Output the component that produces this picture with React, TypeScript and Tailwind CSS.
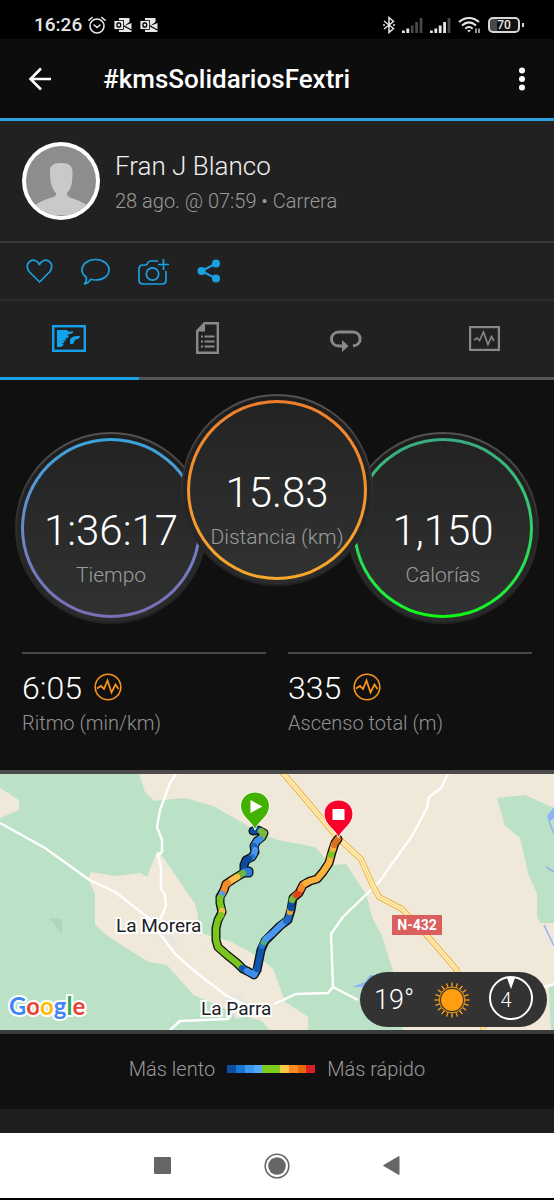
import React from 'react';

const legendColors = [
  'bg-[#0b4ea2]',
  'bg-[#1976d2]',
  'bg-[#3d96f0]',
  'bg-[#52a9ff]',
  'bg-[#7ccb1c]',
  'bg-[#7ccb1c]',
  'bg-[#fdc746]',
  'bg-[#f98b24]',
  'bg-[#e96a0c]',
  'bg-[#d81f26]',
];

const trackOutline =
  'M253 57 L258 56 L264 59 L262 63 L257 67 L254 72 L255 78 L252 83 L246 86 L244 91 L244 98 L249 97 L249 99 L244 99 L240 101 L232 106 L226 110 L224 116 L220 123 L220 129 L222 138 L218 146 L216 154 L216 166 L218 173 L227 181 L237 189 L243 195 L249 198 L254 201 L257 196 L259 186 L261 176 L265 167 L273 159 L280 152 L288 146 L291 136 L293 124 L299 119 L303 111 L310 107 L317 105 L323 98 L329 89 L332 78 L335 69 L338 65';

const trackParts = [
  { color: '#0c4c9c', d: 'M253 57 L258 56 L261 57' },
  { color: '#7ab93a', d: 'M261 57 L264 59 L262 63 L260 65' },
  { color: '#3f8eea', d: 'M260 65 L257 67 L254 72' },
  { color: '#1f63b8', d: 'M254 72 L255 76' },
  { color: '#4a97f2', d: 'M255 76 L254 80 L252 83' },
  { color: '#2a72cc', d: 'M252 83 L249 85' },
  { color: '#0c4c9c', d: 'M249 85 L246 86 L244 91 L244 98' },
  { color: '#2f7ddb', d: 'M244 98 L249 97 L249 99 L244 99' },
  { color: '#6fb53c', d: 'M243 99 L240 101 L237 103' },
  { color: '#fbc04a', d: 'M237 103 L232 106 L228 109' },
  { color: '#f58a2a', d: 'M228 109 L226 110 L224 116 L222 120' },
  { color: '#5a9be0', d: 'M222 120 L220 124' },
  { color: '#7ac520', d: 'M220 124 L220 129 L222 137' },
  { color: '#f3c24a', d: 'M222 137 L221 141' },
  { color: '#7ac520', d: 'M221 141 L218 146 L216 154 L216 166 L218 173 L227 181 L237 189 L242 194' },
  { color: '#1459ad', d: 'M242 194 L247 197' },
  { color: '#3f8eea', d: 'M247 197 L254 201 L257 195' },
  { color: '#0f56ad', d: 'M257 195 L259 186 L261 176 L262 172' },
  { color: '#2a72cc', d: 'M262 172 L264 168' },
  { color: '#4fae72', d: 'M264 168 L266 165' },
  { color: '#4a97f2', d: 'M266 165 L273 159 L280 152 L286 147' },
  { color: '#1f6ac4', d: 'M286 147 L288 146 L290 138' },
  { color: '#e6a63a', d: 'M290 138 L291 134' },
  { color: '#0c4c9c', d: 'M291 134 L292 126' },
  { color: '#7ab93a', d: 'M292 126 L293 124 L296 121' },
  { color: '#e0431c', d: 'M296 121 L299 119 L301 115' },
  { color: '#f58a2a', d: 'M301 115 L303 111 L306 109' },
  { color: '#fbb23c', d: 'M306 109 L310 107 L317 105 L323 98 L329 89 L331 81' },
  { color: '#7ac520', d: 'M331 81 L333 75' },
  { color: '#f9b23a', d: 'M333 75 L334 71' },
  { color: '#d9701c', d: 'M334 71 L335 69 L338 65' },
];

const StatusBar = () => (
  <div className="flex h-[39px] items-center justify-between bg-black pt-[10px] pr-[30px] pl-[34px] text-[#e6e6e6]">
    <div className="flex items-center gap-2">
      <span className="w-[46px] text-[19px] leading-6 font-medium">16:26</span>
      <svg width="18" height="18" viewBox="0 0 18 18" fill="none" stroke="currentColor" strokeWidth="1.6" strokeLinecap="round">
        <circle cx="9" cy="10" r="7" />
        <path d="M6 9 L9 11.500 L12 9 M1 4.200 L4.200 1.500 M17 4.200 L13.800 1.500" />
      </svg>
      {[0, 1].map((i) => (
        <svg key={i} width="18" height="14" viewBox="0 0 18 14">
          <path d="M5 0 H15.500 V4 L10 8 L17.500 5 V14 H5 Z" fill="currentColor" />
          <path d="M10 8 L17.500 12" stroke="#000" strokeWidth="1.400" />
          <rect x="0" y="2.500" width="9.500" height="9" fill="currentColor" stroke="#000" strokeWidth="0.800" />
          <rect x="3" y="5" width="3.600" height="4" rx="1.200" fill="none" stroke="#000" strokeWidth="1.400" />
        </svg>
      ))}
    </div>

    <div className="flex items-center gap-[7px]">
      <svg width="12" height="18" viewBox="0 0 12 18" fill="none" stroke="currentColor" strokeWidth="1.500">
        <path d="M1 5 L10.500 12.500 L6 16.500 V1.500 L10.500 5.500 L1 13" />
        <path d="M0 9 H2 M10 9 H12" />
      </svg>
      {[2, 4].map((level) => (
        <svg key={level} width="21" height="16" viewBox="0 0 21 16">
          {[2.5, 4.5, 7.5, 11, 15].map((h, i) => (
            <rect key={h} x={i * 4.4} y={16 - h} width="2.800" height={h} fill={i < level ? '#e6e6e6' : '#484848'} />
          ))}
        </svg>
      ))}
      <svg width="23" height="18" viewBox="0 0 23 18" fill="none" stroke="currentColor" strokeWidth="2">
        <path d="M1 6 C7 0.500 15 0.500 21 6 M4 9.500 C8.500 5.500 13.500 5.500 18 9.500 M7.300 12.700 C9.800 10.500 12.200 10.500 14.700 12.700" />
        <path d="M9.200 14 L11 16.500 L12.800 14 Z" fill="currentColor" stroke="none" />
        <path d="M18 17 V12.500 M21 12.500 V17" strokeWidth="1.300" />
      </svg>
      <div className="flex items-center gap-[2px]">
        <div className="flex h-4 w-8 items-center justify-center rounded-[5px] border-2 border-[#d6d6d6] bg-linear-to-r from-[#484848] from-25% to-[#111] to-26% text-xs leading-3 font-medium">
          70
        </div>
        <div className="h-1 w-[2px] bg-[#d6d6d6]" />
      </div>
    </div>
  </div>
);

const AppBar = () => (
  <header className="flex h-[82px] items-center border-b-[3px] border-[#2e9fdf] bg-[#0d0d0d] pr-5 pl-7 text-white">
    <button type="button" aria-label="Atrás" className="w-[75px]">
      <svg width="24" height="24" viewBox="0 0 24 24" fill="none" stroke="currentColor" strokeWidth="2.600">
        <path d="M23 12 H2.500 M13 1.500 L2.500 12 L13 22.500" />
      </svg>
    </button>
    <h1 className="flex-1 text-[26px] leading-8 font-medium">#kmsSolidariosFextri</h1>
    <button type="button" aria-label="Más opciones" className="flex w-6 justify-center">
      <svg width="6" height="24" viewBox="0 0 6 24" fill="currentColor">
        <circle cx="3" cy="3.500" r="3" />
        <circle cx="3" cy="12" r="3" />
        <circle cx="3" cy="20.500" r="3" />
      </svg>
    </button>
  </header>
);

const Profile = () => (
  <section className="flex h-[122px] items-center gap-[15px] border-b-2 border-[#383838] px-[22px]">
    <svg width="78" height="78" viewBox="0 0 78 78">
      <defs>
        <clipPath id="avatar">
          <circle cx="39" cy="39" r="35" />
        </clipPath>
      </defs>
      <circle cx="39" cy="39" r="39" fill="#fff" />
      <circle cx="39" cy="39" r="35" fill="#8d8d8d" />
      <path
        clipPath="url(#avatar)"
        fill="#c9c9c9"
        d="M28 31 C27 24 31 21 39 21 C47 21 51 24 50.500 31 C50.500 42 49 47 45 51 C45 55 47 55 52 57 C58 59 62 61 66 64 V73 H12 V64 C17 60 22 58 28 56 C33 55 34 54 34 51 C30 47 28 41 28 31 Z"
      />
    </svg>
    <div className="pt-[5px]">
      <h2 className="text-[26px] leading-8 font-light text-[#f0f0f0]">Fran J Blanco</h2>
      <p className="pt-[3px] text-xl leading-8 font-light text-[#9a9a9a]">28 ago. @ 07:59 • Carrera</p>
    </div>
  </section>
);

const Actions = () => (
  <div className="flex h-[58px] items-center gap-[28px] border-b-2 border-[#2d2d2d] px-[26px] text-[#1ba0e2]">
    <button type="button" aria-label="Me gusta">
      <svg width="27" height="24" viewBox="0 0 27 24" fill="none" stroke="currentColor" strokeWidth="1.700" strokeLinejoin="round">
        <path d="M13.500 23 L3.500 13 C0 9 1 4 4 2.200 C7.500 0 11 1.500 13.500 5.500 C16 1.500 19.500 0 23 2.200 C26 4 27 9 23.500 13 Z" />
      </svg>
    </button>
    <button type="button" aria-label="Comentar">
      <svg width="29" height="27" viewBox="0 0 29 27" fill="none" stroke="currentColor" strokeWidth="1.700" strokeLinejoin="round">
        <path d="M14.500 1.500 C22 1.500 28 6 28 12 C28 18 22 22 14.500 22 C12.500 22 11 21.800 9.500 21.300 C8 24 6 25.500 3.500 25.800 C5.200 24 5.600 22 5.300 19.200 C2.600 17.300 1 15 1 12 C1 6 7 1.500 14.500 1.500 Z" />
      </svg>
    </button>
    <button type="button" aria-label="Añadir foto">
      <svg width="31" height="27" viewBox="0 0 31 27" fill="none" stroke="currentColor" strokeWidth="1.700">
        <path d="M20 3 H12 C9 3 10.500 7 7.500 7 H5 C2.500 7 1 8.500 1 11 V22 C1 24.500 2.500 26 5 26 H24 C26.500 26 28 24.500 28 22 V13" />
        <circle cx="14.500" cy="16" r="6.200" />
        <path d="M25.500 1 V12 M20 6.500 H31" />
      </svg>
    </button>
    <button type="button" aria-label="Compartir">
      <svg width="24" height="24" viewBox="0 0 24 24" fill="currentColor">
        <path d="M19 4.500 L4.500 12 L19 19.500" fill="none" stroke="currentColor" strokeWidth="2" />
        <circle cx="19" cy="4.500" r="4" />
        <circle cx="4.500" cy="12" r="4" />
        <circle cx="19" cy="19.500" r="4" />
      </svg>
    </button>
  </div>
);

const Tabs = () => (
  <nav className="grid h-[79px] grid-cols-4 text-[#898989]">
    <button type="button" aria-label="Resumen" className="flex items-center justify-center border-b-[3px] border-[#1ba0e2] pb-[2px] text-[#12a2ec]">
      <svg width="34" height="27" viewBox="0 0 34 27">
        <rect x="1.200" y="1.200" width="31.600" height="24.600" fill="none" stroke="currentColor" strokeWidth="2.400" />
        <path
          fill="currentColor"
          d="M5 5 H15 L16 6.500 H21 V8 L15 10 L17 11 L16 12.500 L13 14 L15 15.500 H11 L13 17 L10 18.500 L12 20 L9 22 H5 Z M18 19 V14 C20 11.500 23 11 28 11 L27 13.500 L23 15 L21 19 Z"
        />
      </svg>
    </button>
    <button type="button" aria-label="Detalles" className="flex items-center justify-center border-b-[3px] border-[#555] pb-[2px]">
      <svg width="23" height="32" viewBox="0 0 23 32">
        <path d="M1.200 30.800 V9 L8.500 1.200 H21.800 V30.800 Z" fill="none" stroke="currentColor" strokeWidth="2.400" />
        <path d="M1 9 L8 1 H9 V9.500 H1 Z" fill="currentColor" />
        <path d="M5 14.500 H7 M8.500 14.500 H18.500 M5 19.500 H7 M8.500 19.500 H18.500 M5 24.500 H7 M8.500 24.500 H18.500" stroke="currentColor" strokeWidth="2" />
      </svg>
    </button>
    <button type="button" aria-label="Vueltas" className="flex items-center justify-center border-b-[3px] border-[#555] pt-[3px]">
      <svg width="32" height="22" viewBox="0 0 32 22">
        <path d="M14 16 H9 C-1 16 -1 2 9 2 H22.500 C32 2 33 15 23 16" fill="none" stroke="currentColor" strokeWidth="3" />
        <path d="M12 10 L18.500 16 L12 22 Z" fill="currentColor" />
      </svg>
    </button>
    <button type="button" aria-label="Gráficas" className="flex items-center justify-center border-b-[3px] border-[#555] pb-[2px]">
      <svg width="31" height="25" viewBox="0 0 31 25" fill="none" stroke="currentColor">
        <rect x="1.100" y="1.100" width="28.800" height="22.800" strokeWidth="2.200" />
        <path d="M5 14 L8 12 L10.500 14.500 L14.500 6 L19 18.500 L22.500 10.500 L25 15" strokeWidth="1.600" />
      </svg>
    </button>
  </nav>
);

interface RingProps {
  value: string;
  label: string;
  ring: string;
  className?: string;
}

const Ring: React.FC<RingProps> = ({ value, label, ring, className = '' }) => (
  <div className={`h-48 w-48 shrink-0 rounded-full bg-linear-to-b from-[#565252] via-[#2c2c2c] to-[#222] p-[2px] ${className}`}>
    <div className="h-full rounded-full bg-linear-to-b from-[#1d1d1d] to-[#2b2b2d] p-1">
      <div className={`h-full rounded-full bg-linear-to-b p-[3px] ${ring}`}>
        <div className="flex h-full flex-col items-center rounded-full bg-linear-to-b from-[#232323] to-[#303231] pt-[66px]">
          <span className="text-[42px] leading-[48px] font-light text-white">{value}</span>
          <span className="pt-1 text-[21px] leading-8 font-light whitespace-nowrap text-[#9c9c9c]">{label}</span>
        </div>
      </div>
    </div>
  </div>
);

const Stat = ({ value, label }: { value: string; label: string }) => (
  <div className="border-t-2 border-[#484848] pt-[14px]">
    <div className="flex items-center gap-3">
      <span className="text-[32px] leading-10 font-light text-white">{value}</span>
      <svg width="28" height="28" viewBox="0 0 28 28" fill="none" stroke="#f7941d" className="mb-[2px]">
        <circle cx="14" cy="14" r="12.800" strokeWidth="1.600" />
        <path d="M3 15.500 L7 13 L10 16 L13.500 7.500 L17.500 19.500 L21.500 11.500 L24.500 16" strokeWidth="1.800" />
      </svg>
    </div>
    <p className="text-xl leading-[30px] font-light text-[#929292]">{label}</p>
  </div>
);

const Pin = ({ x, y, color, children }: { x: number; y: number; color: string; children: React.ReactNode }) => (
  <g transform={`translate(${x} ${y})`}>
    <path d="M0 0 C-3 -9 -14.500 -13 -14.500 -24 C-14.500 -32 -8 -38 0 -38 C8 -38 14.500 -32 14.500 -24 C14.500 -13 3 -9 0 0 Z" fill={color} stroke="#fff" strokeWidth="1" />
    {children}
  </g>
);

const RouteMap = () => (
  <section className="relative h-[264px] overflow-hidden border-y-[4px] border-t-[#4b4b4b] border-b-[#3a3d3b]">
    <svg className="h-full w-full" viewBox="0 0 554 256" preserveAspectRatio="xMidYMid slice">
      <rect width="554" height="256" fill="#f0e8d8" />
      {/* woodland */}
      <g fill="#bbe2c6">
        <path d="M0 0 H139 L145 18 L154 27 L185 24 L213 32 L245 50 L262 60 L278 66 L315 73 L325 84 L335 91 L346 90 L366 120 L372 143 L382 162 L393 197 L403 256 H308 V243 L285 228 L273 195 L267 190 L250 178 L229 167 L197 158 L198 141 L195 130 L178 105 L160 79 L157 77 L147 103 L141 99 L115 102 L91 98 L88 105 L95 120 V150 L105 160 L126 174 L149 188 L167 191 L194 221 L233 238 L262 247 L270 256 H0 Z" />
        <path d="M497 24 L525 21 L554 34 V149 L540 149 L537 142 V120 L528 99 L520 64 L505 52 Z" />
        <path d="M549 214 L554 210 V256 H551 Z" />
      </g>
      {/* clearing between both halves of the track */}
      <path d="M229 167 L250 178 L267 190 L273 195 L285 228 L308 243 V256 H270 L262 247 L233 238 L194 221 L167 191 Z" fill="#f0e8d8" />
      <path d="M0 14 L19 26 V36 L0 44 Z" fill="#f0e8d8" />
      <path d="M49 144 L62 145 V160 Z" fill="#aed6bb" />
      <path d="M153 158 L170 157 L178 174 L165 172 Z M225 224 L240 220 L256 240 L236 245 Z" fill="#e9e5df" />
      <g fill="#8fb4f5">
        <path d="M352 213 L365 208 L370 201 H374 L366 218 L362 213 Z" />
        <path d="M547 42 L554 33 V44 L549 48 Z" />
      </g>
      <path d="M549 47 L554 60 M546 93 L554 98 M544 151 L554 172" stroke="#8fb4f5" strokeWidth="1.500" fill="none" />
      {/* local roads */}
      <g fill="none" stroke="#fff" strokeWidth="2.400" strokeLinejoin="round">
        <path d="M0 49 L45 74 L88 105 L115 118 L150 145 L160 160 L175 180 L198 200 L227 222 L244 230 L262 242" />
        <path d="M176 0 L170 9 L160 36 L157 53 L162 66 V78 L158 81 L161 94 V115 L165 121 L166 132 L160 146" />
        <path d="M170 256 L180 247 L228 245 L232 238" />
        <path d="M448 0 L441 14 L429 23 L427 34 L412 62 L379 108 L343 143 L331 160 L333 213 L328 219 L296 220 L274 230 M333 213 L358 226 M540 214 L554 210" />
      </g>
      {/* N-432 */}
      <g fill="none" strokeLinejoin="round">
        <path d="M282 -2 L301 20 L338 64 L361 85 L372 110 L379 123 L402 135 L431 166 L456 195 L484 256" stroke="#eeb547" strokeWidth="6" />
        <path d="M282 -2 L301 20 L338 64 L361 85 L372 110 L379 123 L402 135 L431 166 L456 195 L484 256" stroke="#fff0bd" strokeWidth="4" />
        <path d="M282 -2 L301 20 L338 64 L361 85 L372 110 L379 123 L402 135 L431 166 L456 195 L484 256" stroke="#f1c35c" strokeWidth="0.800" />
      </g>
      {/* GPS track coloured by pace */}
      <g fill="none" strokeLinejoin="round">
        <path d={trackOutline} stroke="#101010" strokeWidth="9" strokeLinecap="round" />
        {trackParts.map((part) => (
          <path key={part.d} d={part.d} stroke={part.color} strokeWidth="6.400" strokeLinecap="round" />
        ))}
      </g>
      <Pin x={255} y={56} color="#43b102">
        <path d="M-4.500 -30 L7.500 -23.500 L-4.500 -17 Z" fill="#fff" />
      </Pin>
      <Pin x={338.5} y={64} color="#fa0028">
        <rect x="-6" y="-29" width="12" height="11" fill="#fff" />
      </Pin>
    </svg>

    <span className="absolute top-[140px] left-[116px] text-[19px] leading-6 text-[#202124] [-webkit-text-stroke:4px_#fff] [paint-order:stroke]">
      La Morera
    </span>
    <span className="absolute top-[223px] left-[201px] text-[19px] leading-6 text-[#202124] [-webkit-text-stroke:4px_#fff] [paint-order:stroke]">
      La Parra
    </span>
    <span className="absolute top-[141px] left-[392px] w-[50px] bg-[#d9605f] text-center text-sm leading-5 font-bold text-white">N-432</span>

    <span className="absolute top-[216px] left-[9px] font-[Lato,sans-serif] text-2xl leading-8 font-bold [-webkit-text-stroke:4px_#fff] [paint-order:stroke]">
      <span className="text-[#4285f4]">G</span>
      <span className="text-[#ea4335]">o</span>
      <span className="text-[#fbbc05]">o</span>
      <span className="text-[#4285f4]">g</span>
      <span className="text-[#34a853]">l</span>
      <span className="text-[#ea4335]">e</span>
    </span>

    <div className="absolute right-[7px] bottom-[3px] flex h-[55px] w-[187px] items-center justify-between rounded-full bg-[#333] px-[14px] text-white">
      <span className="w-10 text-[27px] leading-8 font-light">19°</span>
      <svg width="36" height="36" viewBox="0 0 36 36">
        {Array.from({ length: 20 }, (_, i) => (
          <path key={i} d="M18 5 V0.500" stroke="#f59a18" strokeWidth="1.400" transform={`rotate(${i * 18} 18 18)`} />
        ))}
        <circle cx="18" cy="18" r="12.800" fill="none" stroke="#f59a18" strokeWidth="1" />
        <circle cx="18" cy="18" r="11" fill="#ff9f0f" />
      </svg>
      <div className="relative mb-1 flex h-11 w-11 items-center justify-center rounded-full border-2 border-white pr-[10px]">
        <svg width="8" height="11" viewBox="0 0 8 11" className="absolute top-0 left-4">
          <path d="M0 0 H8 L4 11 Z" fill="#fff" />
        </svg>
        <span className="pt-1 text-xl leading-6 font-light">4</span>
      </div>
    </div>
  </section>
);

const Legend = () => (
  <div className="flex h-[75px] items-center justify-center gap-3 bg-[#101010] pb-[6px] text-xl leading-8 font-light text-[#9a9a9a]">
    <span>Más lento</span>
    <div className="flex h-2 w-[88px]">
      {legendColors.map((color, i) => (
        <div key={i} className={`flex-1 ${color}`} />
      ))}
    </div>
    <span>Más rápido</span>
  </div>
);

const SystemNav = () => (
  <div className="flex h-[67px] items-center justify-center gap-[93px] border-b-2 border-black bg-white text-[#666]">
    <button type="button" aria-label="Recientes">
      <svg width="17" height="17" viewBox="0 0 17 17">
        <rect width="17" height="17" rx="1" fill="currentColor" />
      </svg>
    </button>
    <button type="button" aria-label="Inicio">
      <svg width="26" height="26" viewBox="0 0 26 26">
        <circle cx="13" cy="13" r="11.800" fill="none" stroke="currentColor" strokeWidth="1.600" />
        <circle cx="13" cy="13" r="8.800" fill="currentColor" />
      </svg>
    </button>
    <button type="button" aria-label="Volver">
      <svg width="17" height="19" viewBox="0 0 17 19">
        <path d="M0.500 9.500 L16 0.500 V18.500 Z" fill="currentColor" stroke="currentColor" strokeLinejoin="round" />
      </svg>
    </button>
  </div>
);

export default function App() {
  return (
    <div className="w-full bg-[#212121] font-[Roboto,sans-serif]">
      <StatusBar />
      <AppBar />
      <Profile />
      <Actions />
      <Tabs />

      <main className="bg-[#101010]">
        <div className="flex justify-center pt-[14px]">
          <Ring value="1:36:17" label="Tiempo" ring="from-[#36a4dc] to-[#7d6cb4]" className="mt-[38px]" />
          <Ring value="15.83" label="Distancia (km)" ring="from-[#ef7f2c] to-[#f9a72b]" className="z-10 -mx-[26px]" />
          <Ring value="1,150" label="Calorías" ring="from-[#3bab80] to-[#10f80e]" className="mt-[38px]" />
        </div>
        <div className="grid grid-cols-2 gap-[22px] px-[22px] pt-7 pb-8">
          <Stat value="6:05" label="Ritmo (min/km)" />
          <Stat value="335" label="Ascenso total (m)" />
        </div>
      </main>

      <RouteMap />
      <Legend />
      <div className="h-6 bg-[#1e1e1e]" />
      <SystemNav />
    </div>
  );
}
